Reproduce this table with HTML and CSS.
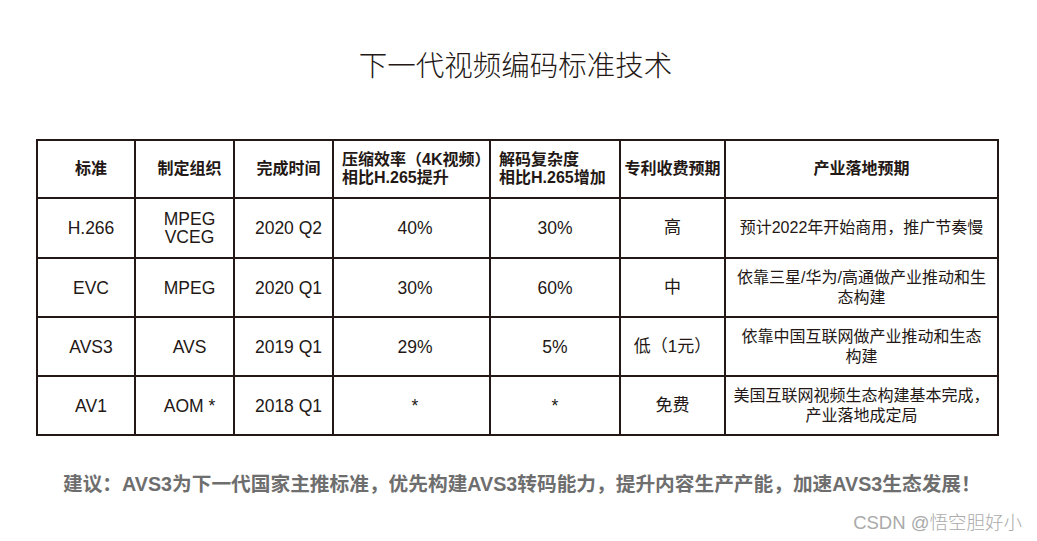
FILE: index.html
```html
<!DOCTYPE html>
<html lang="zh-CN">
<head>
<meta charset="utf-8">
<title>下一代视频编码标准技术</title>
<link rel="stylesheet" href="styles.css">
</head>
<body>
<div class="page">
  <h1 class="title">下一代视频编码标准技术</h1>
  <table class="spec">
    <colgroup>
      <col class="c-std">
      <col class="c-org">
      <col class="c-time">
      <col class="c-eff">
      <col class="c-dec">
      <col class="c-fee">
      <col class="c-ind">
    </colgroup>
    <thead>
      <tr class="head">
        <th class="shift">标准</th>
        <th class="shift">制定组织</th>
        <th class="shift">完成时间</th>
        <th class="left">压缩效率（4K视频）<br>相比H.265提升</th>
        <th class="left">解码复杂度<br>相比H.265增加</th>
        <th class="tight">专利收费预期</th>
        <th>产业落地预期</th>
      </tr>
    </thead>
    <tbody>
      <tr class="r1">
        <td class="shift">H.266</td>
        <td class="shift stack">MPEG<br>VCEG</td>
        <td class="shift">2020 Q2</td>
        <td class="nudge">40%</td>
        <td>30%</td>
        <td class="cjk">高</td>
        <td class="multi">预计2022年开始商用，推广节奏慢</td>
      </tr>
      <tr class="r2">
        <td class="shift">EVC</td>
        <td class="shift">MPEG</td>
        <td class="shift">2020 Q1</td>
        <td class="nudge">30%</td>
        <td>60%</td>
        <td class="cjk">中</td>
        <td class="multi">依靠三星/华为/高通做产业推动和生<br>态构建</td>
      </tr>
      <tr class="r3">
        <td class="shift">AVS3</td>
        <td class="shift">AVS</td>
        <td class="shift">2019 Q1</td>
        <td class="nudge">29%</td>
        <td>5%</td>
        <td class="cjk">低（1元）</td>
        <td class="multi">依靠中国互联网做产业推动和生态<br>构建</td>
      </tr>
      <tr class="r4">
        <td class="shift">AV1</td>
        <td class="shift">AOM *</td>
        <td class="shift">2018 Q1</td>
        <td class="nudge">*</td>
        <td>*</td>
        <td class="cjk">免费</td>
        <td class="multi">美国互联网视频生态构建基本完成，<br>产业落地成定局</td>
      </tr>
    </tbody>
  </table>
  <p class="advice">建议：AVS3为下一代国家主推标准，优先构建AVS3转码能力，提升内容生产产能，加速AVS3生态发展！</p>
  <div class="watermark">CSDN @悟空胆好小</div>
</div>
</body>
</html>
```

FILE: styles.css
```css
html, body {
  margin: 0;
  padding: 0;
  background: #ffffff;
}

body {
  font-family: "Liberation Sans", "Noto Sans CJK SC", sans-serif;
  color: #231815;
}

.page {
  position: relative;
  width: 1037px;
  height: 541px;
  overflow: hidden;
  display: flex;
  flex-direction: column;
  padding-left: 36px;
  box-sizing: border-box;
}

.title {
  margin: 47px 0 0 -36px;
  width: 1031px;
  text-align: center;
  font-family: "Noto Sans CJK SC", sans-serif;
  font-weight: 300;
  font-size: 28.5px;
  line-height: 34px;
  color: #231815;
}

.spec {
  margin-top: 58px;
  width: 961px;
  table-layout: fixed;
  border-collapse: collapse;
  border: 2px solid #231815;
}

.c-std { width: 98px; }
.c-org { width: 99px; }
.c-time { width: 99px; }
.c-eff { width: 157px; }
.c-dec { width: 130px; }
.c-fee { width: 105px; }
.c-ind { width: 273px; }

.spec th,
.spec td {
  border: 2px solid #231815;
  padding: 0 4px;
  text-align: center;
  vertical-align: middle;
  white-space: nowrap;
}

.spec th {
  font-weight: 700;
  font-size: 16px;
  line-height: 18px;
}

.spec th.shift,
.spec td.shift {
  padding: 0 0 0 10px;
}

.spec td.nudge {
  padding: 0 1px 0 8px;
}

.spec th.left {
  text-align: left;
  padding-left: 8px;
  padding-right: 0;
}

.spec th.tight {
  padding: 0 2px;
}

.spec td {
  font-size: 17.5px;
  line-height: 20px;
  font-weight: 400;
}

.spec td.cjk {
  font-size: 17px;
}

.spec td.multi {
  font-size: 16px;
  line-height: 20px;
}

.spec td.stack {
  line-height: 18px;
}

.head { height: 58px; }
.r1 { height: 60px; }
.r2 { height: 59px; }
.r3 { height: 59px; }
.r4 { height: 59px; }

.advice {
  margin: 36px 0 0 27px;
  font-size: 19.7px;
  line-height: 24px;
  font-weight: 700;
  color: #6e6e6e;
  white-space: nowrap;
}

.watermark {
  position: absolute;
  right: 15px;
  top: 512px;
  font-size: 18.5px;
  line-height: 22px;
  font-weight: 300;
  color: #aaaaaa;
}
```
